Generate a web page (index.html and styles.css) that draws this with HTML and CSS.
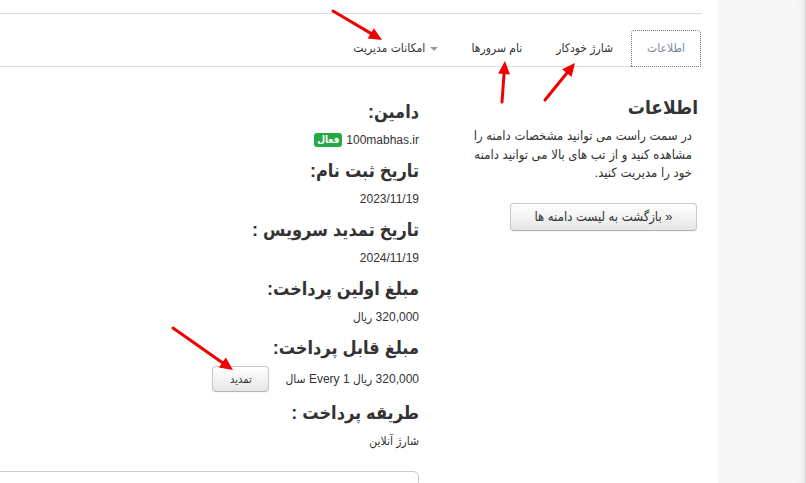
FILE: index.html
```html
<!DOCTYPE html>
<html lang="fa" dir="rtl">
<head>
<meta charset="utf-8">
<title>اطلاعات دامنه</title>
<link rel="stylesheet" href="styles.css">
</head>
<body>
<div class="page">
  <aside class="side"></aside>
  <main class="main">
    <div class="top-rule"></div>
    <ul class="tabs">
      <li class="tab active">اطلاعات</li>
      <li class="tab">شارژ خودکار</li>
      <li class="tab">نام سرورها</li>
      <li class="tab"><span class="caret"></span> امکانات مدیریت</li>
    </ul>
    <div class="content">
      <section class="info">
        <h2 class="info-title">اطلاعات</h2>
        <p class="info-text">در سمت راست می توانید مشخصات دامنه را<br>مشاهده کنید و از تب های بالا می توانید دامنه<br>خود را مدیریت کنید.</p>
        <button class="btn back">« بازگشت به لیست دامنه ها</button>
      </section>
      <section class="details">
        <h4 class="label">دامین:</h4>
        <div class="value"><span dir="ltr">100mabhas.ir</span> <span class="badge">فعال</span></div>
        <h4 class="label">تاریخ ثبت نام:</h4>
        <div class="value">2023/11/19</div>
        <h4 class="label">تاریخ تمدید سرویس :</h4>
        <div class="value">2024/11/19</div>
        <h4 class="label">مبلغ اولین پرداخت:</h4>
        <div class="value">320,000 ریال</div>
        <h4 class="label">مبلغ قابل پرداخت:</h4>
        <div class="value btn-row"><span>320,000 ریال Every 1 سال</span><button class="btn renew">تمدید</button></div>
        <h4 class="label">طریقه پرداخت :</h4>
        <div class="value">شارژ آنلاین</div>
        <div class="box"></div>
      </section>
    </div>
  </main>
</div>
<svg class="arrows" width="806" height="483" viewBox="0 0 806 483" xmlns="http://www.w3.org/2000/svg">
  <g stroke="#f20000" stroke-width="3" stroke-linecap="round" fill="#f20000">
    <line x1="333" y1="11" x2="375.1" y2="35.9"/>
    <line x1="502" y1="102" x2="504.4" y2="69"/>
    <line x1="545" y1="100" x2="570" y2="69.2"/>
    <line x1="173" y1="328" x2="226.4" y2="365.4"/>
  </g>
  <g fill="#f20000">
    <polygon points="382,40 367.7,38.6 373.9,28.2"/>
    <polygon points="505,61 510,74.4 498.1,73.5"/>
    <polygon points="575,63 571.5,76.9 562.1,69.3"/>
    <polygon points="233,370 218.9,367.4 225.8,357.6"/>
  </g>
</svg>
</body>
</html>
```
FILE: styles.css
```css
html, body {
  margin: 0;
  padding: 0;
  background: #fff;
}
body {
  width: 806px;
  height: 483px;
  overflow: hidden;
  position: relative;
  font-family: "Liberation Sans", "DejaVu Sans Condensed", "DejaVu Sans", sans-serif;
  color: #333;
}
.page {
  display: flex;
  flex-direction: row;
  height: 483px;
}
.side {
  width: 87px;
  flex: none;
  background: #f7f7f7;
  border-right: 1px solid #d6d6d6;
  box-shadow: inset -6px 0 6px -4px rgba(0,0,0,0.08);
}
.main {
  flex: 1;
  min-width: 0;
  overflow: hidden;
}
.top-rule {
  margin-top: 13px;
  margin-right: 16px;
  border-top: 1px solid #ddd;
}
.tabs {
  list-style: none;
  margin: 16px 17px 0 0;
  padding: 0;
  display: flex;
  border-bottom: 1px solid #ddd;
  height: 36px;
}
.tab {
  font-size: 12px;
  color: #333;
  padding: 0 16px;
  margin-left: 2px;
  line-height: 36px;
  white-space: nowrap;
}
.tab.active {
  border: 1px dotted #777;
  border-radius: 4px 4px 0 0;
  line-height: 35px;
  box-sizing: border-box;
  color: #8088a0;
  background: #fff;
  padding: 0 15px;
  margin-bottom: -1px;
  height: 37px;
}
.caret {
  display: inline-block;
  width: 0;
  height: 0;
  border-left: 4px solid transparent;
  border-right: 4px solid transparent;
  border-top: 4px solid #999;
  vertical-align: middle;
  margin-left: 1px;
}
.content {
  display: flex;
  flex-direction: row;
  gap: 41px;
  padding-right: 20px;
}
.info {
  width: 238px;
  flex: none;
  padding-top: 28px;
}
.info-title {
  margin: 0;
  font-size: 19px;
  line-height: 26px;
  font-weight: bold;
  color: #333;
}
.info-text {
  margin: 6px 6px 0 -14px;
  font-size: 13px;
  line-height: 18.5px;
  color: #333;
  white-space: nowrap;
}
.btn {
  font-family: inherit;
  color: #333;
  background: linear-gradient(#fff, #e6e6e6);
  border: 1px solid #c8c8c8;
  border-bottom-color: #b3b3b3;
  border-radius: 4px;
  box-shadow: inset 0 1px 0 rgba(255,255,255,.2), 0 1px 2px rgba(0,0,0,.05);
  padding: 0;
}
.back {
  margin-top: 20px;
  width: 187px;
  height: 28px;
  font-size: 13px;
  margin-right: 1px;
}
.details {
  width: 419px;
  flex: none;
  padding-top: 24px;
}
.label {
  margin: 10px 0 7px;
  font-size: 18px;
  line-height: 22px;
  font-weight: bold;
  color: #333;
}
.value {
  font-size: 12px;
  line-height: 20px;
  color: #333;
  display: flex;
  align-items: center;
  gap: 4px;
}
.badge {
  display: inline-block;
  background: #28a745;
  color: #fff;
  font-size: 10px;
  font-weight: bold;
  line-height: 14px;
  padding: 0 3px;
  border-radius: 3px;
}
.btn-row {
  gap: 16px;
}
.renew {
  width: 57px;
  height: 26px;
  font-size: 11px;
}
.box {
  margin-top: 20px;
  height: 40px;
  border: 1px solid #ccc;
  border-left: none;
  border-radius: 0 6px 0 0;
  margin-left: -20px;
}
.arrows {
  position: absolute;
  left: 0;
  top: 0;
  pointer-events: none;
}
```
